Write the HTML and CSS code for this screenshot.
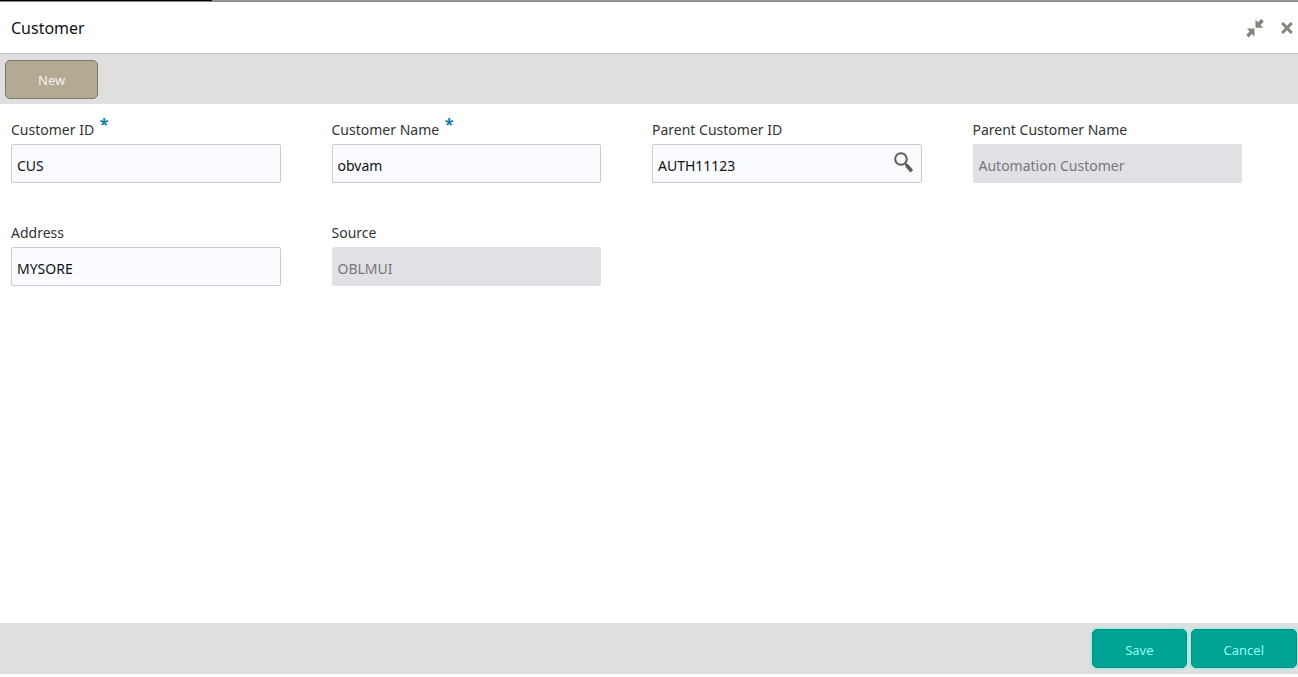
FILE: index.html
```html
<!DOCTYPE html>
<html lang="en">
<head>
    <meta charset="UTF-8">
    <meta name="viewport" content="width=device-width, initial-scale=1.0">
    <title>Customer</title>
    <link rel="stylesheet" href="styles.css">
</head>
<body>
    <div class="top-line"></div>

    <!-- Title bar -->
    <header class="header">
        <h1>Customer</h1>
        <div class="window-actions">
            <button type="button" class="icon-button" aria-label="Collapse">
                <svg width="18" height="20" viewBox="0 0 18 20" fill="#85857a">
                    <path d="M9.500 1.500v8.300h7.700l-2.700-2.800 3.300-3.600L15.300.8l-3.300 3.400z"/>
                    <path d="M8.500 18.800v-8.300H.9l2.600 2.800-3.200 3.600 2.300 2.500 3.300-3.400z"/>
                </svg>
            </button>
            <button type="button" class="icon-button" aria-label="Close">
                <svg width="12" height="12" viewBox="0 0 12 12" fill="none" stroke="#85857a" stroke-width="3">
                    <path d="M1.200 1l9.600 10M10.800 1L1.200 11"/>
                </svg>
            </button>
        </div>
    </header>

    <div class="toolbar">
        <button type="button" class="btn btn-new">New</button>
    </div>

    <!-- Customer details -->
    <main class="form">
        <div class="field">
            <label for="customer-id">Customer ID <span class="required">*</span></label>
            <input type="text" id="customer-id" value="CUS" required>
        </div>
        <div class="field">
            <label for="customer-name">Customer Name <span class="required">*</span></label>
            <input type="text" id="customer-name" value="obvam" required>
        </div>
        <div class="field">
            <label for="parent-id">Parent Customer ID</label>
            <div class="search-box">
                <input type="text" id="parent-id" value="AUTH11123">
                <button type="button" class="icon-button" aria-label="Search">
                    <svg width="22" height="24" viewBox="0 0 22 24" fill="none" stroke="#5c5c55">
                        <circle cx="8" cy="8" r="5.800" stroke-width="2"/>
                        <path d="M12 12.500l2 2" stroke-width="2"/>
                        <path d="M13.300 14l5.500 6.200" stroke-width="3.600"/>
                    </svg>
                </button>
            </div>
        </div>
        <div class="field">
            <label for="parent-name">Parent Customer Name</label>
            <input type="text" id="parent-name" value="Automation Customer" disabled>
        </div>
        <div class="field">
            <label for="address">Address</label>
            <input type="text" id="address" value="MYSORE">
        </div>
        <div class="field">
            <label for="source">Source</label>
            <input type="text" id="source" value="OBLMUI" disabled>
        </div>
    </main>

    <footer class="footer">
        <button type="button" class="btn btn-action">Save</button>
        <button type="button" class="btn btn-action">Cancel</button>
    </footer>
</body>
</html>
```
FILE: styles.css
```css
* {
    box-sizing: border-box;
}

body {
    font-family: "Noto Sans", "Open Sans", sans-serif;
    font-size: 14px;
    line-height: 22px;
    margin: 0;
    padding-bottom: 3px;
    display: flex;
    flex-direction: column;
    min-height: 100vh;
    background-color: #fff;
    color: #333;
}

.top-line {
    height: 2px;
    background: linear-gradient(to right, #000 212px, #999 212px);
    border-bottom: 1px solid #888;
}

/* Title bar */
.header {
    display: flex;
    justify-content: space-between;
    align-items: center;
    height: 52px;
    padding: 0 5px 0 11px;
    border-bottom: 1px solid #c0c0c0;
}

.header h1 {
    margin: 0;
    font-size: 16px;
    font-weight: 400;
    line-height: 24px;
    color: #111;
}

.window-actions {
    display: flex;
    align-items: center;
    gap: 17px;
}

.icon-button {
    display: flex;
    padding: 0;
    border: none;
    background: none;
    cursor: pointer;
}

.toolbar,
.footer {
    display: flex;
    align-items: center;
    background-color: #dfdfdf;
}

.toolbar {
    height: 50px;
    padding: 0 5px;
}

.footer {
    justify-content: flex-end;
    gap: 4px;
    height: 51px;
    padding: 0 1px;
}

/* Buttons */
.btn {
    height: 39px;
    padding: 2px 32px 0;
    border-radius: 5px;
    font-family: inherit;
    font-size: 13px;
    cursor: pointer;
}

.btn-new {
    border: 1px solid #777770;
    background-color: #b4a992;
    color: #f4f2ec;
}

.btn-action {
    border: 1px solid #008f80;
    background-color: #00a394;
    color: #8ffcf2;
    box-shadow: 0 0 0 2px #b5e8e4;
}

/* Form */
.form {
    flex: 1;
    display: grid;
    grid-template-columns: repeat(4, 1fr);
    align-content: start;
    column-gap: 51px;
    row-gap: 39px;
    padding: 15px 56px 16px 11px;
}

.field {
    display: flex;
    flex-direction: column;
    gap: 3px;
}

.required {
    margin-left: 2px;
    font-size: 16px;
    font-weight: 700;
    line-height: 0;
    vertical-align: 5px;
    color: #0b7bab;
}

.field input {
    width: 100%;
    height: 39px;
    padding: 4px 5px 0;
    border: 1px solid #c9ccd3;
    border-radius: 2px;
    background-color: #fafbff;
    font-family: inherit;
    font-size: 14px;
    color: #111;
}

.field input:disabled {
    border-color: #e1e0e5;
    background-color: #e1e0e5;
    color: #77777a;
}

.search-box {
    position: relative;
}

.search-box input {
    padding-right: 36px;
}

.search-box .icon-button {
    position: absolute;
    top: 7px;
    right: 7px;
}
```
